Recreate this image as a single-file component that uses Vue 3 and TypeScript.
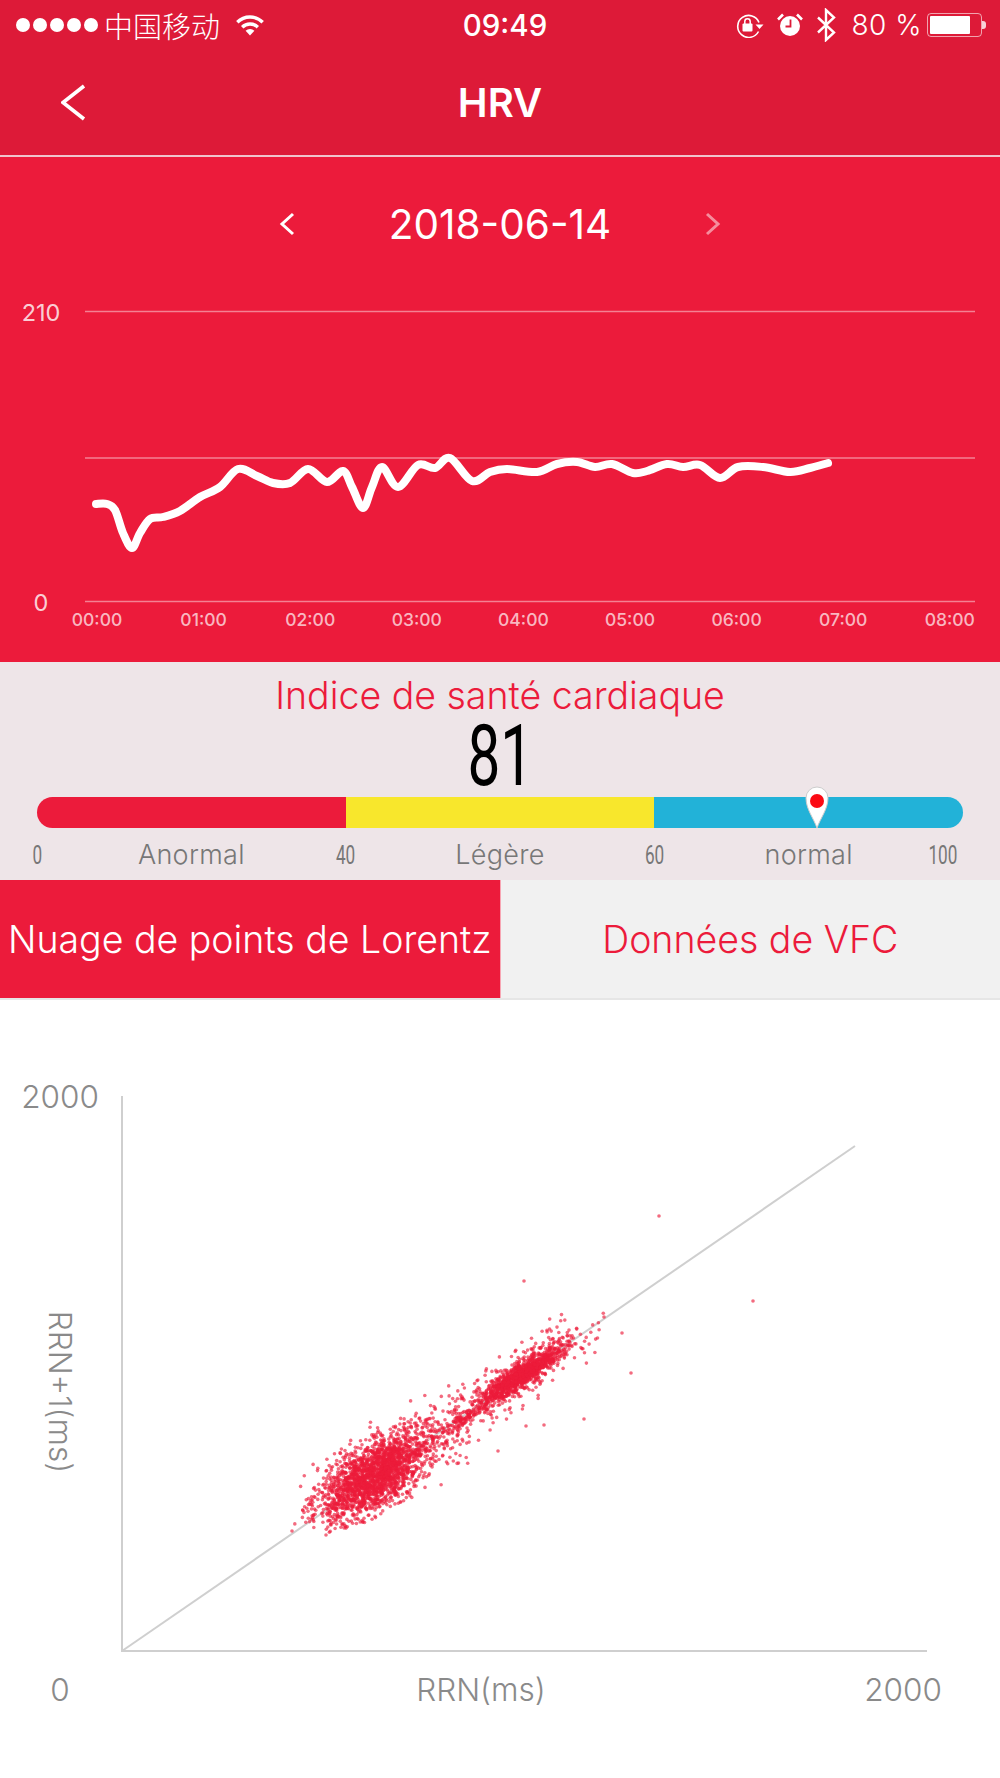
<template>
  <div class="page">
    <header class="top">
      <div class="status">
        <div class="status-left">
          <div class="dots"><i v-for="n in 5" :key="n" class="dot" /></div>
          <span class="carrier">中国移动</span>
          <svg class="wifi" width="30" height="22" viewBox="0 0 30 22">
            <path d="M2.3 8.3A18 18 0 0 1 27.7 8.3" fill="none" stroke="#fff" stroke-width="3.4" />
            <path d="M7.2 13.2A11 11 0 0 1 22.8 13.2" fill="none" stroke="#fff" stroke-width="3.4" />
            <path d="M15 21.5L10.6 16.8A6.2 6.2 0 0 1 19.4 16.8Z" fill="#fff" />
          </svg>
        </div>
        <div class="time">09:49</div>
        <div class="status-right">
          <svg width="29" height="25" viewBox="0 0 29 25">
            <path d="M23.5 18.5A11 11 0 1 1 24 9.5" fill="none" stroke="#fff" stroke-width="1.6" />
            <path d="M20.5 11.5h8l-4 4.5z" fill="#fff" />
            <rect x="7.5" y="10.5" width="10" height="8" rx="1" fill="#fff" />
            <path d="M9.8 11V8.5a2.7 2.7 0 0 1 5.4 0V11" fill="none" stroke="#fff" stroke-width="1.5" />
          </svg>
          <svg class="alarm" width="26" height="24" viewBox="0 0 26 24">
            <circle cx="13" cy="13" r="10" fill="#fff" />
            <path d="M1 6.5L6 1.5M25 6.5L20 1.5" stroke="#fff" stroke-width="2.6" />
            <path d="M13.5 6.5V13.5H8.5" fill="none" stroke="#dd1a38" stroke-width="1.8" />
          </svg>
          <svg class="bt" width="20" height="34" viewBox="0 0 20 34">
            <path d="M2 9.5L18 24.5L10 32V2L18 9.5L2 24.5" fill="none" stroke="#fff" stroke-width="2.4" />
          </svg>
          <span class="battery-text">80 %</span>
          <div class="battery">
            <div class="battery-fill" />
            <i class="battery-nub" />
          </div>
        </div>
      </div>
      <nav class="nav">
        <svg class="back" width="25" height="38" viewBox="0 0 25 38">
          <path d="M23 2L2 18.5L23 35" fill="none" stroke="#fff" stroke-width="3.6" />
        </svg>
        <h1 class="title">HRV</h1>
        <span />
      </nav>
    </header>

    <section class="trend">
      <div class="date-row">
        <svg width="16" height="24" viewBox="0 0 16 24">
          <path d="M14 2L3 12L14 22" fill="none" stroke="#fff" stroke-width="3" />
        </svg>
        <span class="date">2018-06-14</span>
        <svg class="next" width="16" height="24" viewBox="0 0 16 24">
          <path d="M2 2L13 12L2 22" fill="none" stroke="#fff" stroke-width="3" />
        </svg>
      </div>
      <svg class="trend-chart" width="1000" height="371" viewBox="0 291 1000 371">
        <line v-for="y in [311.5, 458, 601.5]" :key="y" x1="85" x2="975" :y1="y" :y2="y" class="grid-line" />
        <text x="41" y="321" class="axis-label" text-anchor="middle">210</text>
        <text x="41" y="611" class="axis-label" text-anchor="middle">0</text>
        <text
          v-for="(h, i) in hours"
          :key="h"
          :x="97 + i * 106.6"
          y="626"
          class="hour-label"
          text-anchor="middle"
        >{{ h }}</text>
        <path :d="trendPath" fill="none" stroke="#fff" stroke-width="8" stroke-linecap="round" stroke-linejoin="round" />
      </svg>
    </section>

    <section class="gauge">
      <div class="gauge-title">Indice de santé cardiaque</div>
      <div class="gauge-value"><span>{{ score }}</span></div>
      <div class="bar">
        <div class="seg seg-red" />
        <div class="seg seg-yellow" />
        <div class="seg seg-blue" />
        <svg class="pin" :style="{ left: pinLeft }" width="26" height="44" viewBox="0 0 26 44">
          <path d="M13 43C9.500 33 2 24 2 13a11 11 0 0 1 22 0C24 24 16.500 33 13 43Z" fill="#fff" stroke="#ccc" stroke-width="1" />
          <circle cx="13" cy="16" r="7" fill="#fb0a14" />
        </svg>
      </div>
      <div class="scale">
        <div class="mark"><span class="num">0</span></div>
        <div class="mark"><span class="word">Anormal</span></div>
        <div class="mark"><span class="num">40</span></div>
        <div class="mark"><span class="word">Légère</span></div>
        <div class="mark"><span class="num">60</span></div>
        <div class="mark"><span class="word">normal</span></div>
        <div class="mark mark-end"><span class="num">100</span></div>
      </div>
    </section>

    <div class="tabs">
      <div class="tab tab-active">Nuage de points de Lorentz</div>
      <div class="tab">Données de VFC</div>
    </div>

    <section class="scatter">
      <svg width="1000" height="778" viewBox="0 1000 1000 778">
        <line x1="122" y1="1096" x2="122" y2="1652" class="axis" />
        <line x1="121" y1="1651" x2="927" y2="1651" class="axis" />
        <line x1="122" y1="1651" x2="855" y2="1146" class="axis" />
        <circle v-for="(p, i) in points" :key="i" :cx="p[0]" :cy="p[1]" r="1.8" class="point" />
        <text x="60" y="1108" class="scatter-label" text-anchor="middle">2000</text>
        <text x="60" y="1701" class="scatter-label" text-anchor="middle">0</text>
        <text x="481" y="1701" class="scatter-label" text-anchor="middle">RRN(ms)</text>
        <text x="903" y="1701" class="scatter-label" text-anchor="middle">2000</text>
        <text x="0" y="0" class="scatter-label" text-anchor="middle" transform="translate(49 1392) rotate(90)">RRN+1(ms)</text>
      </svg>
    </section>
  </div>
</template>

<script setup lang="ts">
import { computed } from 'vue'

type Point = [number, number]

const hours = ['00:00', '01:00', '02:00', '03:00', '04:00', '05:00', '06:00', '07:00', '08:00']
const score = 81

// Traced from the night's curve, in page coordinates
const trend: Point[] = [
  [96, 504], [107, 504], [115, 510], [123, 533], [132, 548], [140, 533], [150, 519], [163, 517],
  [180, 511], [200, 497], [220, 487], [238, 469], [257, 476], [273, 483], [290, 483], [308, 469],
  [327, 482], [343, 471], [352, 487], [363, 508], [372, 487], [382, 467], [398, 487], [418, 465],
  [435, 468], [450, 458], [472, 481], [490, 472], [507, 469], [537, 472], [557, 464], [577, 462],
  [595, 467], [612, 464], [633, 473], [647, 471], [667, 464], [683, 467], [700, 465], [720, 478],
  [738, 467], [763, 467], [790, 472], [810, 468], [828, 463],
]

const trendPath = computed(() => {
  let d = `M${trend[0][0]} ${trend[0][1]}`
  for (let i = 0; i < trend.length - 1; i++) {
    const p0 = trend[Math.max(i - 1, 0)]
    const p1 = trend[i]
    const p2 = trend[i + 1]
    const p3 = trend[Math.min(i + 2, trend.length - 1)]
    const c1x = p1[0] + (p2[0] - p0[0]) / 6
    const c1y = p1[1] + (p2[1] - p0[1]) / 6
    const c2x = p2[0] - (p3[0] - p1[0]) / 6
    const c2y = p2[1] - (p3[1] - p1[1]) / 6
    d += `C${c1x.toFixed(1)} ${c1y.toFixed(1)} ${c2x.toFixed(1)} ${c2y.toFixed(1)} ${p2[0]} ${p2[1]}`
  }
  return d
})

// The last band of the bar runs 60-100, each band takes a third of the width
const pinLeft = computed(() => `${(2 / 3 + (score - 60) / 40 / 3) * 100}%`)

function makeRandom(seed: number) {
  return () => {
    seed = (seed + 0x6d2b79f5) | 0
    let t = Math.imul(seed ^ (seed >>> 15), 1 | seed)
    t = (t + Math.imul(t ^ (t >>> 7), 61 | t)) ^ t
    return ((t ^ (t >>> 14)) >>> 0) / 4294967296
  }
}

const points = computed(() => {
  const rand = makeRandom(2018)
  const gauss = () => Math.sqrt(-2 * Math.log(rand() || 0.001)) * Math.cos(2 * Math.PI * rand())
  const out: Point[] = []
  const cloud = (n: number, cx: number, cy: number, along: number, across: number) => {
    for (let i = 0; i < n; i++) {
      let u = gauss()
      let v = gauss()
      // redraw far tails so each cloud keeps an oval outline
      while (u * u + v * v > 7) {
        u = gauss()
        v = gauss()
      }
      const a = u * along
      const b = v * across
      out.push([+(cx + a * 0.82 + b * 0.57).toFixed(1), +(cy - a * 0.57 + b * 0.82).toFixed(1)])
    }
  }
  cloud(1900, 374, 1476, 32, 14)
  cloud(320, 382, 1466, 40, 20)
  cloud(1000, 522, 1375, 26, 5.5)
  cloud(260, 518, 1378, 34, 12)
  cloud(90, 462, 1420, 14, 3)
  cloud(170, 445, 1428, 28, 16)
  cloud(30, 570, 1335, 16, 14)
  const outliers: Point[] = [
    [659, 1216], [753, 1301], [524, 1281], [631, 1373], [584, 1419], [604, 1317], [622, 1333],
    [498, 1451], [544, 1425], [526, 1426], [292, 1531], [326, 1535],
  ]
  return out.concat(outliers)
})
</script>

<style scoped>
.page {
  width: 1000px;
  height: 1778px;
  overflow: hidden;
  background: #fff;
  font-family: Inter, "Noto Sans CJK SC", sans-serif;
}

.top {
  background: #dd1a38;
  border-bottom: 2px solid #f0c4cc;
  color: #fff;
}

.status {
  display: grid;
  grid-template-columns: 1fr auto 1fr;
  align-items: center;
  height: 50px;
}

.status-left {
  display: flex;
  align-items: center;
  padding-left: 16px;
}

.dots {
  display: flex;
  gap: 3px;
}

.dot {
  width: 14px;
  height: 14px;
  border-radius: 50%;
  background: #fff;
}

.carrier {
  margin-left: 6px;
  font-family: "Noto Sans CJK SC", sans-serif;
  font-size: 29px;
  font-weight: 300;
}

.wifi {
  margin-left: 15px;
}

.time {
  margin-left: 10px;
  font-size: 29.5px;
  font-weight: 500;
}

.status-right {
  display: flex;
  align-items: center;
  justify-content: flex-end;
  padding-right: 18px;
}

.alarm {
  margin-left: 13px;
}

.bt {
  margin-left: 13px;
}

.battery-text {
  margin-left: 15px;
  font-size: 28px;
  font-weight: 300;
  letter-spacing: 0.5px;
}

.battery {
  position: relative;
  box-sizing: border-box;
  width: 55px;
  height: 24px;
  margin-left: 5px;
  padding: 2px;
  border: 1px solid rgba(255, 255, 255, 0.6);
  border-radius: 4px;
}

.battery-fill {
  width: 40px;
  height: 100%;
  background: #fff;
  border-radius: 1px;
}

.battery-nub {
  position: absolute;
  top: 7px;
  right: -5px;
  width: 4px;
  height: 8px;
  border-radius: 0 3px 3px 0;
  background: rgba(255, 255, 255, 0.8);
}

.nav {
  display: grid;
  grid-template-columns: 1fr auto 1fr;
  align-items: center;
  height: 105px;
}

.back {
  margin-left: 61px;
}

.title {
  margin: 0;
  font-size: 40px;
  font-weight: 600;
}

.trend {
  background: #ec1b3b;
}

.date-row {
  display: flex;
  align-items: center;
  justify-content: center;
  gap: 94px;
  height: 134px;
  color: #fff;
}

.next {
  opacity: 0.5;
}

.date {
  font-size: 40.5px;
  font-weight: 400;
}

.trend-chart {
  display: block;
}

.grid-line {
  stroke: rgba(255, 255, 255, 0.45);
  stroke-width: 1.5;
}

.axis-label {
  font-size: 23.5px;
  font-weight: 400;
  fill: rgba(255, 255, 255, 0.8);
}

.hour-label {
  font-size: 17.5px;
  font-weight: 500;
  fill: rgba(255, 255, 255, 0.7);
}

.gauge {
  box-sizing: border-box;
  height: 218px;
  padding-top: 14px;
  background: #eee5e8;
  text-align: center;
}

.gauge-title {
  height: 40px;
  font-size: 37.5px;
  font-weight: 300;
  line-height: 40px;
  color: #ec1b3b;
}

.gauge-value {
  height: 70px;
  margin-top: 5px;
  font-family: Roboto, sans-serif;
  font-size: 86px;
  font-weight: 400;
  line-height: 70px;
  color: #000;
}

.gauge-value span {
  display: inline-block;
  transform: scaleX(0.68);
}

.bar {
  position: relative;
  display: flex;
  height: 31px;
  margin: 6px 37px 0;
}

.seg {
  flex: 1;
}

.seg-red {
  background: #ec1b3b;
  border-radius: 16px 0 0 16px;
}

.seg-yellow {
  background: #f8e72c;
}

.seg-blue {
  background: #22b2d8;
  border-radius: 0 16px 16px 0;
}

.pin {
  position: absolute;
  top: -12px;
  margin-left: -12px;
}

.scale {
  display: flex;
  justify-content: space-between;
  height: 34px;
  margin: 10px 37px 0;
  color: #777;
  line-height: 34px;
}

.mark {
  display: flex;
  justify-content: center;
  width: 0;
  white-space: nowrap;
}

.mark-end {
  transform: translateX(-20px);
}

.word {
  font-size: 27px;
  font-weight: 300;
  letter-spacing: 0.3px;
}

.num {
  display: inline-block;
  font-family: Roboto, sans-serif;
  font-size: 26px;
  transform: scaleX(0.66);
}

.tabs {
  display: flex;
  height: 120px;
  box-sizing: border-box;
  border-bottom: 2px solid #e6e6e6;
}

.tab {
  display: flex;
  flex: 1;
  align-items: center;
  justify-content: center;
  background: #f1f1f1;
  color: #ec1b3b;
  font-size: 37.500px;
  font-weight: 300;
  white-space: nowrap;
}

.tab-active {
  background: #ec1b3b;
  color: #fff;
  border-right: 1px solid #f7a6b3;
}

.scatter svg {
  display: block;
}

.axis {
  stroke: #cfcfcf;
  stroke-width: 2;
}

.point {
  fill: #ec1b3b;
  fill-opacity: 0.65;
}

.scatter-label {
  font-size: 31.5px;
  font-weight: 300;
  fill: #8a8a8a;
}
</style>
